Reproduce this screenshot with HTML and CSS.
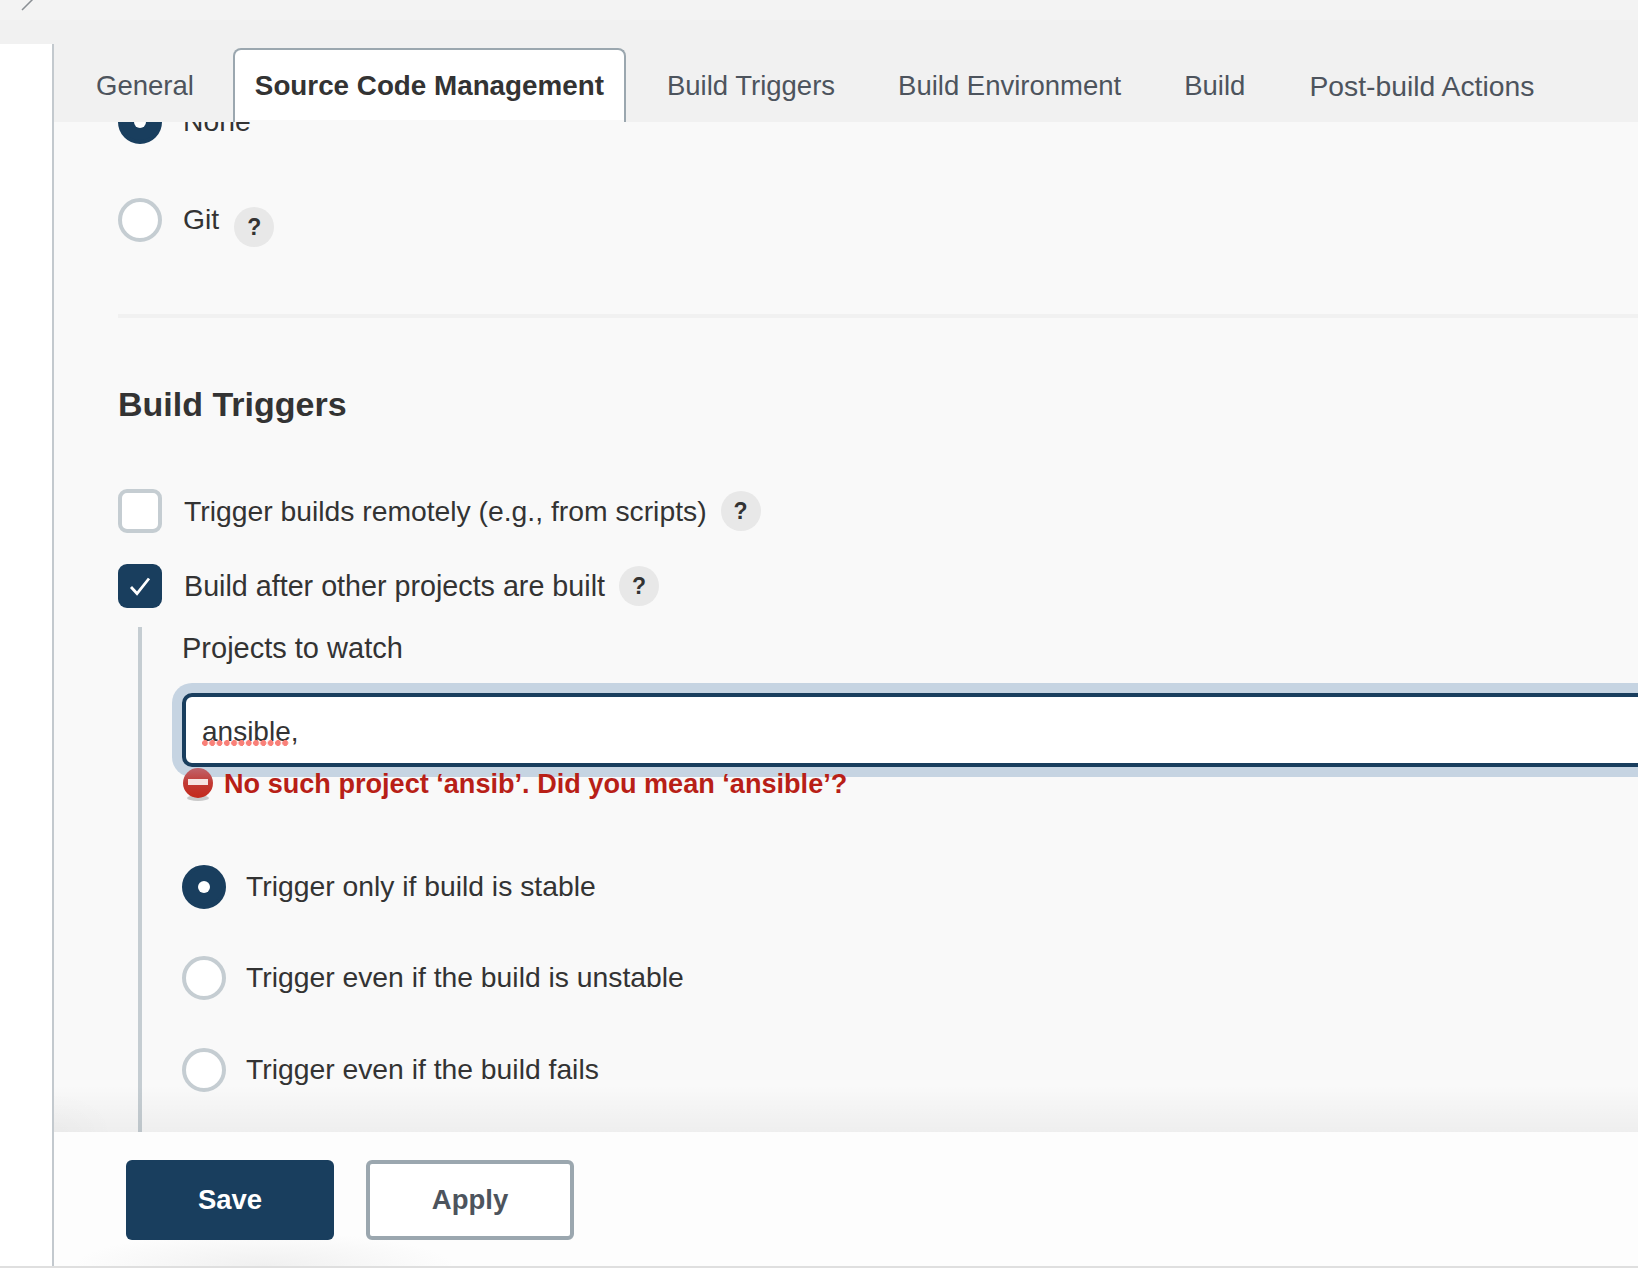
FILE: index.html
```html
<!DOCTYPE html>
<html>
<head>
    <title>Configure</title>
    <link rel="stylesheet" href="styles.css">
</head>
<body>
    <div class="topbar">
        <svg class="crumb" width="14" height="12" viewBox="0 0 14 12"><path d="M2 10 L12 0 L6 -6" fill="none" stroke="#8a8f94" stroke-width="1.5"/></svg>
    </div>
    <div class="layout">
        <div class="sidebar"></div>
        <div class="main">
            <div class="tabbar">
                <a class="tab">General</a>
                <a class="tab active">Source Code Management</a>
                <a class="tab">Build Triggers</a>
                <a class="tab">Build Environment</a>
                <a class="tab">Build</a>
                <a class="tab">Post-build Actions</a>
            </div>
            <div class="panel">
                <div class="form">
                    <div class="scm-row first">
                        <span class="radio checked"></span>
                        <span class="scm-label">None</span>
                    </div>
                    <div class="scm-row">
                        <span class="radio"></span>
                        <span class="scm-label">Git</span>
                        <span class="help help-low">?</span>
                    </div>
                    <div class="divider"></div>
                    <h2 class="section-title">Build Triggers</h2>
                    <div class="check-row">
                        <span class="checkbox"></span>
                        <span class="check-label">Trigger builds remotely (e.g., from scripts)</span>
                        <span class="help">?</span>
                    </div>
                    <div class="check-row second">
                        <span class="checkbox checked">
                            <svg width="44" height="44" viewBox="0 0 44 44"><path d="M13 23 L19 29.500 L31 14.500" fill="none" stroke="#fff" stroke-width="2.800"/></svg>
                        </span>
                        <span class="check-label">Build after other projects are built</span>
                        <span class="help">?</span>
                    </div>
                    <div class="nested">
                        <div class="field-label">Projects to watch</div>
                        <div class="input-wrap">
                            <input class="text-input" type="text" value="ansible," spellcheck="false">
                            <span class="squiggle"></span>
                        </div>
                        <div class="error">
                            <svg class="error-icon" width="32" height="34" viewBox="0 0 32 34">
                                <defs>
                                    <linearGradient id="stopFill" x1="0" y1="0" x2="0" y2="1">
                                        <stop offset="0" stop-color="#c0646c"/>
                                        <stop offset="0.5" stop-color="#c23a34"/>
                                        <stop offset="1" stop-color="#c42a1c"/>
                                    </linearGradient>
                                </defs>
                                <ellipse cx="16" cy="31" rx="11" ry="3" fill="#c9c9c9"/>
                                <circle cx="16" cy="16" r="15" fill="url(#stopFill)"/>
                                <rect x="6" y="12" width="20" height="6" fill="#f6e4e2"/>
                            </svg>
                            <span>No such project ‘ansib’. Did you mean ‘ansible’?</span>
                        </div>
                        <div class="trigger-row top">
                            <span class="radio checked"></span>
                            <span class="trigger-label">Trigger only if build is stable</span>
                        </div>
                        <div class="trigger-row">
                            <span class="radio"></span>
                            <span class="trigger-label">Trigger even if the build is unstable</span>
                        </div>
                        <div class="trigger-row">
                            <span class="radio"></span>
                            <span class="trigger-label">Trigger even if the build fails</span>
                        </div>
                    </div>
                </div>
                <div class="panel-shade"></div>
            </div>
            <div class="footer">
                <button class="btn primary">Save</button>
                <button class="btn secondary">Apply</button>
            </div>
        </div>
    </div>
    <div class="page-end"></div>
</body>
</html>
```
FILE: styles.css
```css
html, body {
    margin: 0;
    height: 1276px;
    overflow: hidden;
}

body {
    font-family: "Liberation Sans", Arial, sans-serif;
    font-size: 28.3px;
    color: #333;
    background-color: #fff;
    display: flex;
    flex-direction: column;
}

.topbar {
    height: 44px;
    flex: none;
    background: linear-gradient(#f3f3f3 0, #f3f3f3 20px, #f1f1f1 20px);
    padding-left: 20px;
}

.crumb {
    display: block;
}

.layout {
    height: 1222px;
    flex: none;
    display: flex;
}

.sidebar {
    width: 52px;
    flex: none;
    border-right: 2px solid #c3c9ce;
}

.main {
    flex: 1;
    min-width: 0;
    display: flex;
    flex-direction: column;
}

/* tabs */
.tabbar {
    height: 78px;
    flex: none;
    display: flex;
    align-items: flex-end;
    gap: 19px;
    padding-left: 20px;
    background-color: #f1f1f1;
    position: relative;
    z-index: 2;
}

.tab {
    height: 74px;
    box-sizing: border-box;
    padding: 0 20px;
    border: 2px solid transparent;
    border-bottom: 0;
    display: flex;
    align-items: center;
    font-size: 27.500px;
    color: #4d545d;
    white-space: nowrap;
}

.tab:last-child {
    margin-left: 1px;
    font-size: 28.300px;
}

.active {
    margin-left: -2px;
    background-color: #fff;
    border-color: #9ba7af;
    border-radius: 8px 8px 0 0;
    box-shadow: inset 0 -2px 0 #f9f9f9;
    font-size: 27.800px;
    color: #333;
    font-weight: bold;
}

/* scrolled form */
.panel {
    flex: 1;
    min-height: 0;
    background-color: #f9f9f9;
    overflow: hidden;
    position: relative;
}

.form {
    margin-top: -22px;
    padding-left: 64px;
}

.scm-row {
    height: 44px;
    margin-bottom: 54px;
    display: flex;
    align-items: center;
}

.scm-label {
    margin: -2px 0 0 21px;
}

.help-low {
    margin-left: 15px;
    transform: translateY(7px);
}

.radio {
    width: 44px;
    height: 44px;
    flex: none;
    box-sizing: border-box;
    border: 4px solid #c5cdd2;
    border-radius: 50%;
    background-color: #fff;
    display: flex;
    align-items: center;
    justify-content: center;
}

.radio.checked {
    border-color: #193e5e;
    background-color: #193e5e;
}

.radio.checked::after {
    content: "";
    width: 12px;
    height: 12px;
    border-radius: 50%;
    background-color: #fff;
}

.help {
    width: 40px;
    height: 40px;
    flex: none;
    border-radius: 50%;
    background-color: #e8e8e8;
    display: flex;
    align-items: center;
    justify-content: center;
    font-size: 23px;
    font-weight: bold;
}

.divider {
    height: 4px;
    background-color: #f1f1f1;
    margin-top: 72px;
}

.section-title {
    margin: 66px 0 0;
    font-size: 34px;
    line-height: 40px;
    font-weight: bold;
}

.check-row {
    height: 44px;
    margin-top: 65px;
    display: flex;
    align-items: center;
}

.check-row.second {
    margin-top: 31px;
}

.second .check-label {
    font-size: 28.700px;
}

.checkbox {
    width: 44px;
    height: 44px;
    flex: none;
    box-sizing: border-box;
    border: 4px solid #c5cdd2;
    border-radius: 9px;
    background-color: #fff;
    overflow: hidden;
}

.checkbox.checked {
    border: 0;
    background-color: #193e5e;
}

.checkbox svg {
    display: block;
}

.check-label {
    margin: 0 14px 0 22px;
}

.nested {
    margin: 19px 0 0 20px;
    border-left: 4px solid #c5cdd2;
    padding-left: 40px;
    padding-bottom: 80px;
}

.field-label {
    line-height: 42px;
    font-size: 29px;
}

.input-wrap {
    margin-top: 24px;
    position: relative;
}

.text-input {
    display: block;
    width: calc(100% + 60px);
    height: 74px;
    box-sizing: border-box;
    border: 4px solid #193e5e;
    border-radius: 10px;
    box-shadow: 0 0 0 10px #c6d4e2;
    padding: 4px 16px 0;
    font-family: inherit;
    font-size: 28px;
    color: #333;
    background-color: #fff;
    outline: none;
}

.squiggle {
    position: absolute;
    left: 20px;
    top: 47px;
    width: 87px;
    height: 6px;
    background-image: radial-gradient(circle at 3px 3px, #f98078 2.800px, transparent 3.100px);
    background-size: 7.300px 6px;
}

.error {
    height: 34px;
    display: flex;
    align-items: center;
    gap: 10px;
    font-size: 27.100px;
    color: #b81f17;
    font-weight: bold;
    position: relative;
}

.error-icon {
    flex: none;
}

.trigger-row {
    height: 44px;
    margin-top: 47px;
    display: flex;
    align-items: center;
}

.trigger-row:last-child {
    margin-top: 48px;
}

.trigger-row.top {
    margin-top: 64px;
}

.trigger-label {
    margin: -2px 0 0 20px;
}

.panel-shade {
    position: absolute;
    left: 0;
    right: 0;
    bottom: 0;
    height: 47px;
    background: radial-gradient(ellipse 60px 40px at 0 100%, rgba(0, 0, 0, 0.02), rgba(0, 0, 0, 0)), linear-gradient(rgba(0, 0, 0, 0), rgba(0, 0, 0, 0.045));
}

/* sticky buttons */
.footer {
    height: 134px;
    flex: none;
    display: flex;
    align-items: center;
    gap: 32px;
    padding: 2px 0 0 72px;
    box-sizing: border-box;
    background: radial-gradient(ellipse 190px 34px at 210px 134px, #f0f0f0, rgba(240, 240, 240, 0)), #fdfdfd;
}

.btn {
    width: 208px;
    height: 80px;
    box-sizing: border-box;
    border-radius: 6px;
    font-family: inherit;
    font-size: 27.500px;
    font-weight: bold;
}

.primary {
    border: 0;
    background-color: #193e5e;
    color: #fff;
}

.secondary {
    border: 4px solid #9ba7af;
    background-color: #fff;
    color: #4d545d;
}

.page-end {
    height: 2px;
    position: absolute;
    left: 0;
    right: 0;
    top: 1266px;
    background-color: #dfdfdf;
}
```
